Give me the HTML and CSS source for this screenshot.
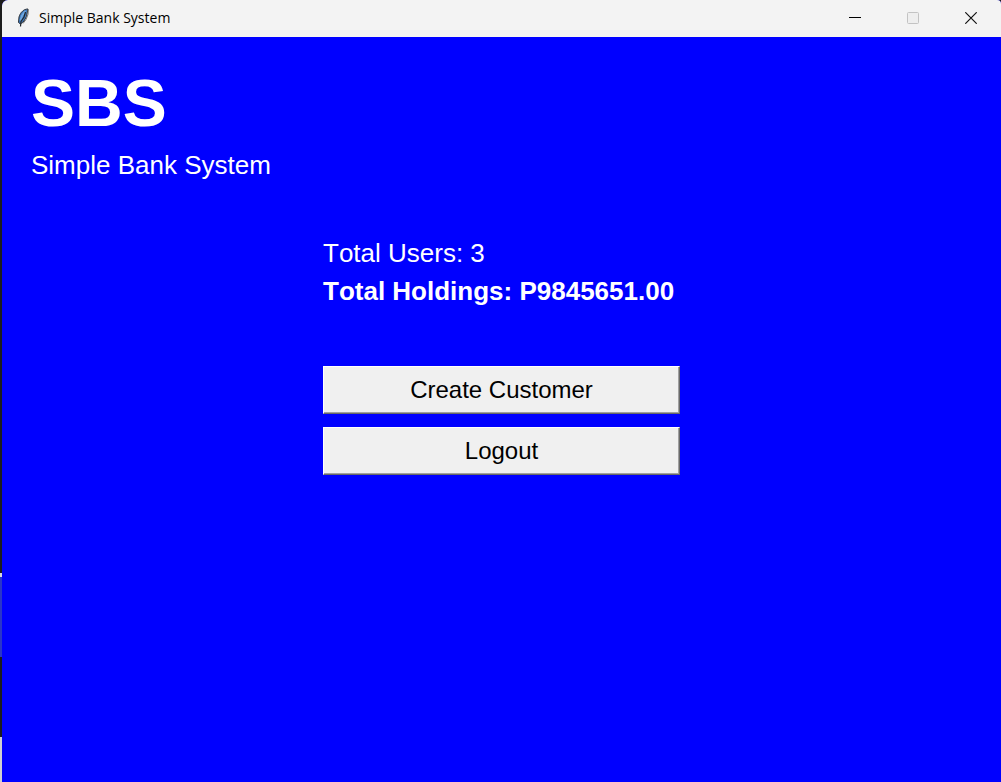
FILE: index.html
```html
<!DOCTYPE html>
<html lang="en">
<head>
<meta charset="utf-8">
<meta name="viewport" content="width=device-width, initial-scale=1">
<title>Simple Bank System</title>
<link rel="stylesheet" href="styles.css">
</head>
<body>
<div class="desktop">
  <div class="window">
    <header class="titlebar">
      <svg class="app-icon" viewBox="0 0 14 22" aria-hidden="true">
        <path d="M13 2C9 2 5.500 5 4 10l-.5 5.500 2 1.500 3.500-3 2.500-4.500z" fill="#3f79bd" stroke="#2a3036"/>
        <path d="M10.500 4C8 6.500 6.500 9 5.500 13.500" fill="none" stroke="#6fa8e0" stroke-width="2"/>
        <path d="M10.500 5L9 10l-3 4.500-.5 5" fill="none" stroke="#20262c" stroke-width="1.200"/>
        <path d="M13.300 2.500l-.3 5-2 5-3 4" fill="none" stroke="#777" stroke-width="1"/>
      </svg>
      <span class="caption">Simple Bank System</span>
      <div class="controls">
        <button class="control" type="button" aria-label="Minimize">
          <svg viewBox="0 0 12 12"><path d="M0 5.500h12" stroke="#000"/></svg>
        </button>
        <button class="control" type="button" aria-label="Maximize" disabled>
          <svg viewBox="0 0 12 12"><rect x=".5" y=".5" width="11" height="11" rx="1" fill="#eee" stroke="#c3c3c3"/></svg>
        </button>
        <button class="control" type="button" aria-label="Close">
          <svg viewBox="0 0 12 12"><path d="M.3.300l11.400 11.400M11.700.300L.3 11.700" stroke="#111" stroke-width="1.200"/></svg>
        </button>
      </div>
    </header>
    <main class="content">
      <div class="brand">
        <h1 class="logo">SBS</h1>
        <p class="tagline">Simple Bank System</p>
      </div>
      <section class="panel">
        <p class="stat">Total Users: 3</p>
        <p class="stat stat-strong">Total Holdings: P9845651.00</p>
        <div class="actions">
          <button class="action" type="button">Create Customer</button>
          <button class="action" type="button">Logout</button>
        </div>
      </section>
    </main>
  </div>
</div>
</body>
</html>
```
FILE: styles.css
```css
* {
  box-sizing: border-box;
}

body {
  margin: 0;
  font-family: "Liberation Sans", Arial, sans-serif;
}

/* The strip left of the window shows what lies behind it. */
.desktop {
  display: flex;
  min-height: 100vh;
  padding-left: 2px;
  background: linear-gradient(#1c1c1c 573px, #d8d8d8 573px, #d8d8d8 577px, #2a35c8 577px, #2a35c8 657px, #1c1c1c 657px, #1c1c1c 737px, #d0d0d0 737px);
}

.window {
  flex: 1;
  display: flex;
  flex-direction: column;
  background: #0000ff;
  border-radius: 6px 4px 0 0;
  overflow: hidden;
}

.titlebar {
  display: flex;
  align-items: center;
  height: 37px;
  padding: 0 1px 2px 13px;
  background: #f3f3f3;
}

.app-icon {
  width: 14px;
  height: 22px;
  margin-right: 10px;
}

.caption {
  flex: 1;
  font-family: "Open Sans", "Noto Sans", sans-serif;
  font-size: 14px;
  color: #000;
}

.controls {
  display: flex;
  align-self: stretch;
}

.control {
  display: flex;
  align-items: center;
  justify-content: center;
  width: 58px;
  padding: 0;
  border: 0;
  background: transparent;
}

.control svg {
  width: 12px;
  height: 12px;
}

.content {
  flex: 1;
  display: flex;
  flex-direction: column;
  padding: 28px 29px;
  color: #fff;
  font-kerning: none;
}

.logo {
  margin: 0;
  font-size: 66px;
  line-height: 76px;
}

.tagline {
  margin: 8px 0 0;
  font-size: 26px;
  line-height: 32px;
}

.panel {
  align-self: center;
  min-width: 357px;
  margin-top: 53px;
}

.stat {
  margin: 0;
  font-size: 26px;
  line-height: 38px;
}

.stat-strong {
  font-weight: bold;
}

.actions {
  display: flex;
  flex-direction: column;
  gap: 13px;
  margin-top: 56px;
}

.action {
  height: 48px;
  padding: 0;
  border: 1px solid;
  border-color: #fff #696969 #696969 #fff;
  border-radius: 0;
  box-shadow: inset -1px -1px #a0a0a0;
  background: #f0f0f0;
  color: #000;
  font-family: inherit;
  font-size: 24px;
  font-kerning: none;
}
```
